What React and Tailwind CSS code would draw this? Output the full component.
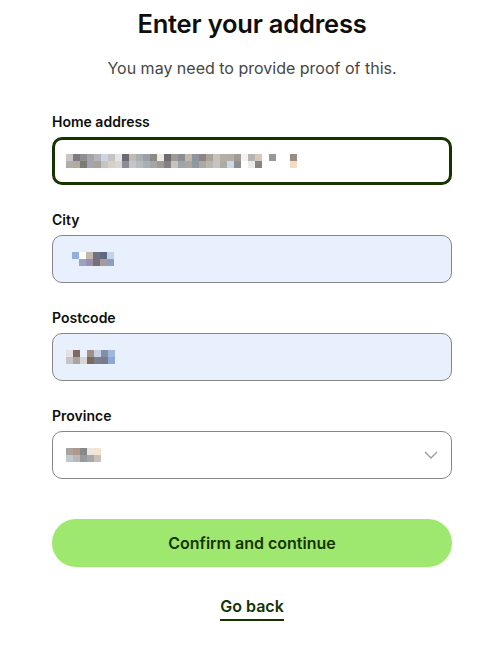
import React from 'react';

const homeTop = ['#c9c6c4', '#7a7a80', '#8e8f91', '#a4a5aa', '#b7b5b8', '#c8d6e6', '#c6c3c2', '#e6e4e3', '#6c6a75', '#c4bab1', '#a9aeb4', '#9aa0a8', '#8e8a88', '#efe9df', '#6e6c6c', '#a09a96', '#8a8d93', '#c3b7a9', '#8b959e', '#8e8580', '#a8a39c', '#c9c2b9', '#b4aea8', '#b5aca8', '#9e9b98', '#f4f2f0', '#b8b3ae', '#d7c8b8', '#ffffff', '#989898', '#ffffff', '#ffffff', '#9a8c80'];
const homeBot = ['#b0aeac', '#b6aa9c', '#7f7b72', '#a7a2b4', '#a8a29a', '#c4c4c4', '#d5d0c8', '#d9d5d0', '#8b8c95', '#c3c7c8', '#b8bbbd', '#a7b0b6', '#a2a6a7', '#9e9a96', '#868180', '#c7c4c0', '#a0a4aa', '#a9a5a0', '#9098a2', '#ada7a6', '#bab6ae', '#c4c4c4', '#aeaaa4', '#c8d8e4', '#908c8c', '#ffffff', '#e6ece6', '#8a8480', '#ffffff', '#ffffff', '#ffffff', '#ffffff', '#f4dcc0'];

const cityTop = ['#8fb0dc', '#ffffff', '#c2b8ae', '#6f7380', '#5e6880', '#c4d4e8'];
const cityBot = ['#e8f0fe', '#9aa4bc', '#9890ae', '#7a7070', '#a59aa0', '#8d9ec0'];

const postTop = ['#e4e0e4', '#7d6a60', '#e8f0fe', '#a09088', '#c8d0e4', '#8090a8', '#a0b8dc'];
const postBot = ['#c8c4c4', '#a8a4a4', '#d8d4d4', '#7a6a60', '#7a8090', '#787c84', '#8ba8d8'];

const provTop = ['#a8a4a0', '#b09888', '#888888', '#e8e8e0', '#f4e4d0'];
const provBot = ['#c0c8d0', '#b8b8b8', '#9a9a9a', '#a8a8a8', '#c8c0b8'];

function Pixels({ top, bottom }) {
  return (
    <div className="flex flex-col">
      <div className="flex">
        {top.map((c, i) => (
          <span key={i} className="h-[7px] w-[7px]" style={{ backgroundColor: c }} />
        ))}
      </div>
      <div className="flex">
        {bottom.map((c, i) => (
          <span key={i} className="h-[7px] w-[7px]" style={{ backgroundColor: c }} />
        ))}
      </div>
    </div>
  );
}

function Field({ label, children, className }) {
  return (
    <div className="mb-6">
      <div className="mb-1 text-[14px] font-semibold leading-[22px] text-[#0e0f0c]">{label}</div>
      <div className={`flex h-12 items-center rounded-[10px] px-4 ${className}`}>{children}</div>
    </div>
  );
}

export default function App() {
  return (
    <div className="min-h-screen bg-white font-['Inter',sans-serif]">
      <div className="ml-[52px] w-[400px] pt-[7px]">
        <h1 className="text-center text-[25.5px] font-semibold leading-[34px] tracking-[-0.2px] text-[#0e0f0c]">
          Enter your address
        </h1>
        <p className="mt-[15px] text-center text-[16px] leading-6 text-[#454745]">
          You may need to provide proof of this.
        </p>

        <div className="mt-[31px]">
          <Field label="Home address" className="border-[3px] border-[#163300] bg-white pl-[11px]">
            <Pixels top={homeTop} bottom={homeBot} />
          </Field>
          <Field label="City" className="border border-[#868685] bg-[#e8f0fe] pl-[19px]">
            <Pixels top={cityTop} bottom={cityBot} />
          </Field>
          <Field label="Postcode" className="border border-[#868685] bg-[#e8f0fe] pl-[13px]">
            <Pixels top={postTop} bottom={postBot} />
          </Field>
          <Field label="Province" className="justify-between border border-[#868685] bg-white pl-[13px] pr-[13px]">
            <Pixels top={provTop} bottom={provBot} />
            <svg width="14" height="8" viewBox="0 0 14 8" fill="none" stroke="#9a9b99" strokeWidth="1.3">
              <path d="M1 1l6 6 6-6" />
            </svg>
          </Field>
        </div>

        <button
          type="button"
          className="mt-10 flex h-12 w-full items-center justify-center rounded-full bg-[#9fe870] text-[16px] font-semibold text-[#163300]"
        >
          Confirm and continue
        </button>

        <div className="mt-[27px] flex justify-center">
          <a className="border-b-2 border-[#163300] pb-[1px] text-[16px] font-semibold leading-6 text-[#163300]">
            Go back
          </a>
        </div>
      </div>
    </div>
  );
}
